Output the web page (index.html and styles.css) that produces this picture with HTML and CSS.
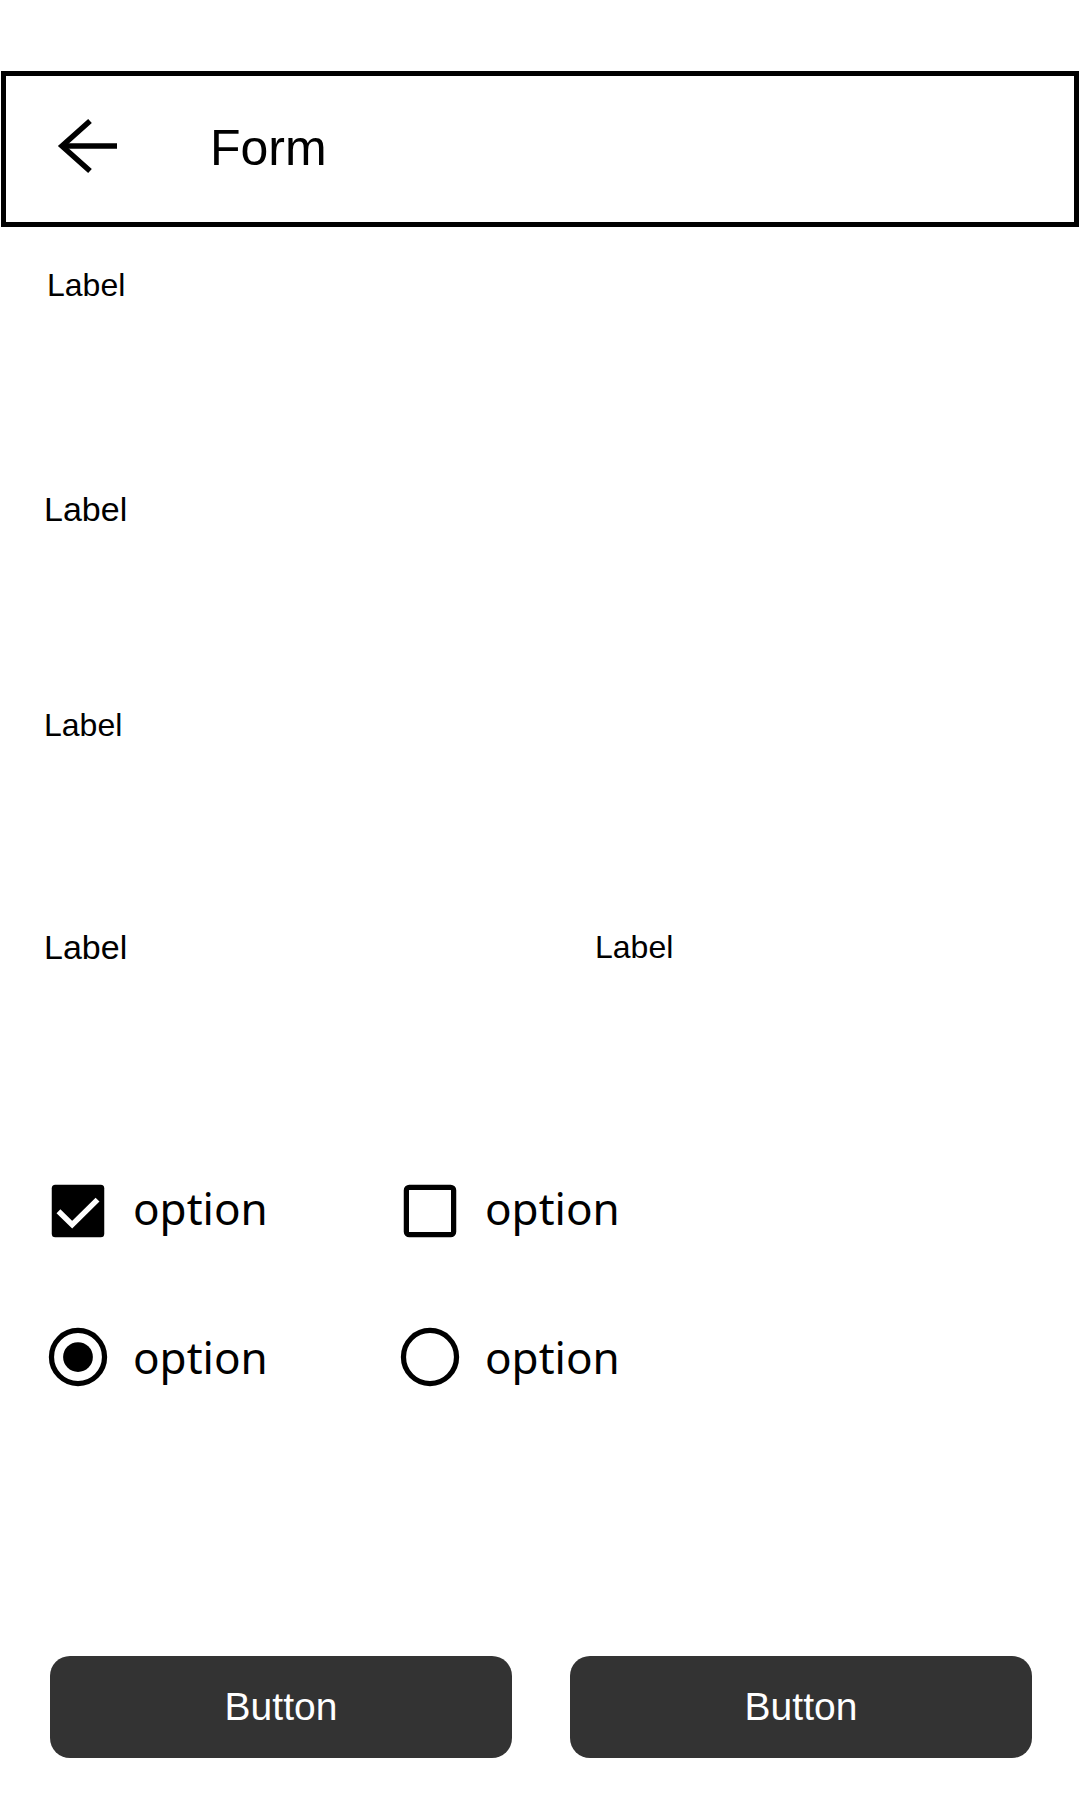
FILE: index.html
```html
<!DOCTYPE html>
<html lang="en">
<head>
<meta charset="utf-8">
<title>Form</title>
<link rel="stylesheet" href="styles.css">
</head>
<body>
<header class="app-bar">
  <svg class="back-icon" width="64" height="62" viewBox="0 0 64 62" aria-hidden="true">
    <path d="M34 4 L6 29 L34 54" fill="none" stroke="#000" stroke-width="5.5" stroke-linejoin="miter"/>
    <path d="M6 29 H61" fill="none" stroke="#000" stroke-width="5.5"/>
  </svg>
  <h1 class="app-title">Form</h1>
</header>

<main class="form">
  <div class="field field-1">
    <div class="label">Label</div>
  </div>
  <div class="field field-2">
    <div class="label label-lg">Label</div>
  </div>
  <div class="field field-3">
    <div class="label">Label</div>
  </div>
  <div class="field-row">
    <div class="field field-4">
      <div class="label label-lg">Label</div>
    </div>
    <div class="field field-4">
      <div class="label">Label</div>
    </div>
  </div>

  <div class="options">
    <div class="option">
      <svg class="opt-icon" viewBox="0 0 24 24" aria-hidden="true">
        <rect x="3" y="3" width="18" height="18" rx="1.2" fill="#000"/>
        <path d="M5.3 12.1 L10 16.7 L18.7 8.1" fill="none" stroke="#fff" stroke-width="1.9"/>
      </svg>
      <span class="opt-text">option</span>
    </div>
    <div class="option">
      <svg class="opt-icon" viewBox="0 0 24 24" aria-hidden="true">
        <rect x="3.9" y="3.9" width="16.2" height="16.2" rx="1" fill="none" stroke="#000" stroke-width="1.8"/>
      </svg>
      <span class="opt-text">option</span>
    </div>
    <div class="option">
      <svg class="opt-icon" viewBox="0 0 24 24" aria-hidden="true">
        <circle cx="12" cy="12" r="9.1" fill="none" stroke="#000" stroke-width="1.8"/>
        <circle cx="12" cy="12" r="5.1" fill="#000"/>
      </svg>
      <span class="opt-text opt-text-radio">option</span>
    </div>
    <div class="option">
      <svg class="opt-icon" viewBox="0 0 24 24" aria-hidden="true">
        <circle cx="12" cy="12" r="9.1" fill="none" stroke="#000" stroke-width="1.8"/>
      </svg>
      <span class="opt-text opt-text-radio">option</span>
    </div>
  </div>

  <div class="actions">
    <button class="btn" type="button">Button</button>
    <button class="btn" type="button">Button</button>
  </div>
</main>
</body>
</html>
```
FILE: styles.css
```css
* {
  box-sizing: border-box;
}

html, body {
  margin: 0;
  padding: 0;
  background: #ffffff;
}

body {
  font-family: "Liberation Sans", Arial, sans-serif;
  color: #000000;
  width: 1080px;
}

.app-bar {
  margin: 71px 1px 0 1px;
  height: 156px;
  border: 5px solid #000000;
  display: flex;
  align-items: center;
  padding-left: 50px;
}

.back-icon {
  display: block;
  flex: none;
  margin-top: -3px;
}

.app-title {
  margin: 0 0 0 90px;
  font-size: 50px;
  font-weight: 400;
  line-height: 1.15;
}

.form {
  padding: 40px 44px 0 44px;
}

.field {
  display: flex;
  flex-direction: column;
}

.label {
  font-size: 32px;
  line-height: 37px;
  height: 37px;
}

.label-lg {
  font-size: 34px;
  line-height: 37px;
}

.field-1 {
  height: 224px;
  padding-left: 3px;
}

.field-2 {
  height: 216px;
}

.field-3 {
  height: 222px;
}

.field-row {
  display: grid;
  grid-template-columns: 1fr 1fr;
  column-gap: 110px;
}

.field-4 {
  height: 247px;
}

.options {
  display: grid;
  grid-template-columns: 352px 352px;
  row-gap: 76px;
  margin-left: -1px;
}

.option {
  display: flex;
  align-items: center;
  gap: 20px;
  height: 70px;
}

.opt-icon {
  width: 70px;
  height: 70px;
  display: block;
  flex: none;
}

.opt-text {
  font-family: "Noto Sans", "Open Sans", sans-serif;
  font-size: 44px;
  line-height: 60px;
  padding-bottom: 6px;
}

.opt-text-radio {
  padding-bottom: 0;
}

.actions {
  display: grid;
  grid-template-columns: 1fr 1fr;
  column-gap: 58px;
  margin: 264px -44px 0 -44px;
  padding: 0 48px 0 50px;
}

.btn {
  height: 102px;
  border: none;
  border-radius: 20px;
  background: #333333;
  color: #ffffff;
  font-family: "Liberation Sans", Arial, sans-serif;
  font-size: 39px;
  padding: 0;
}
```
